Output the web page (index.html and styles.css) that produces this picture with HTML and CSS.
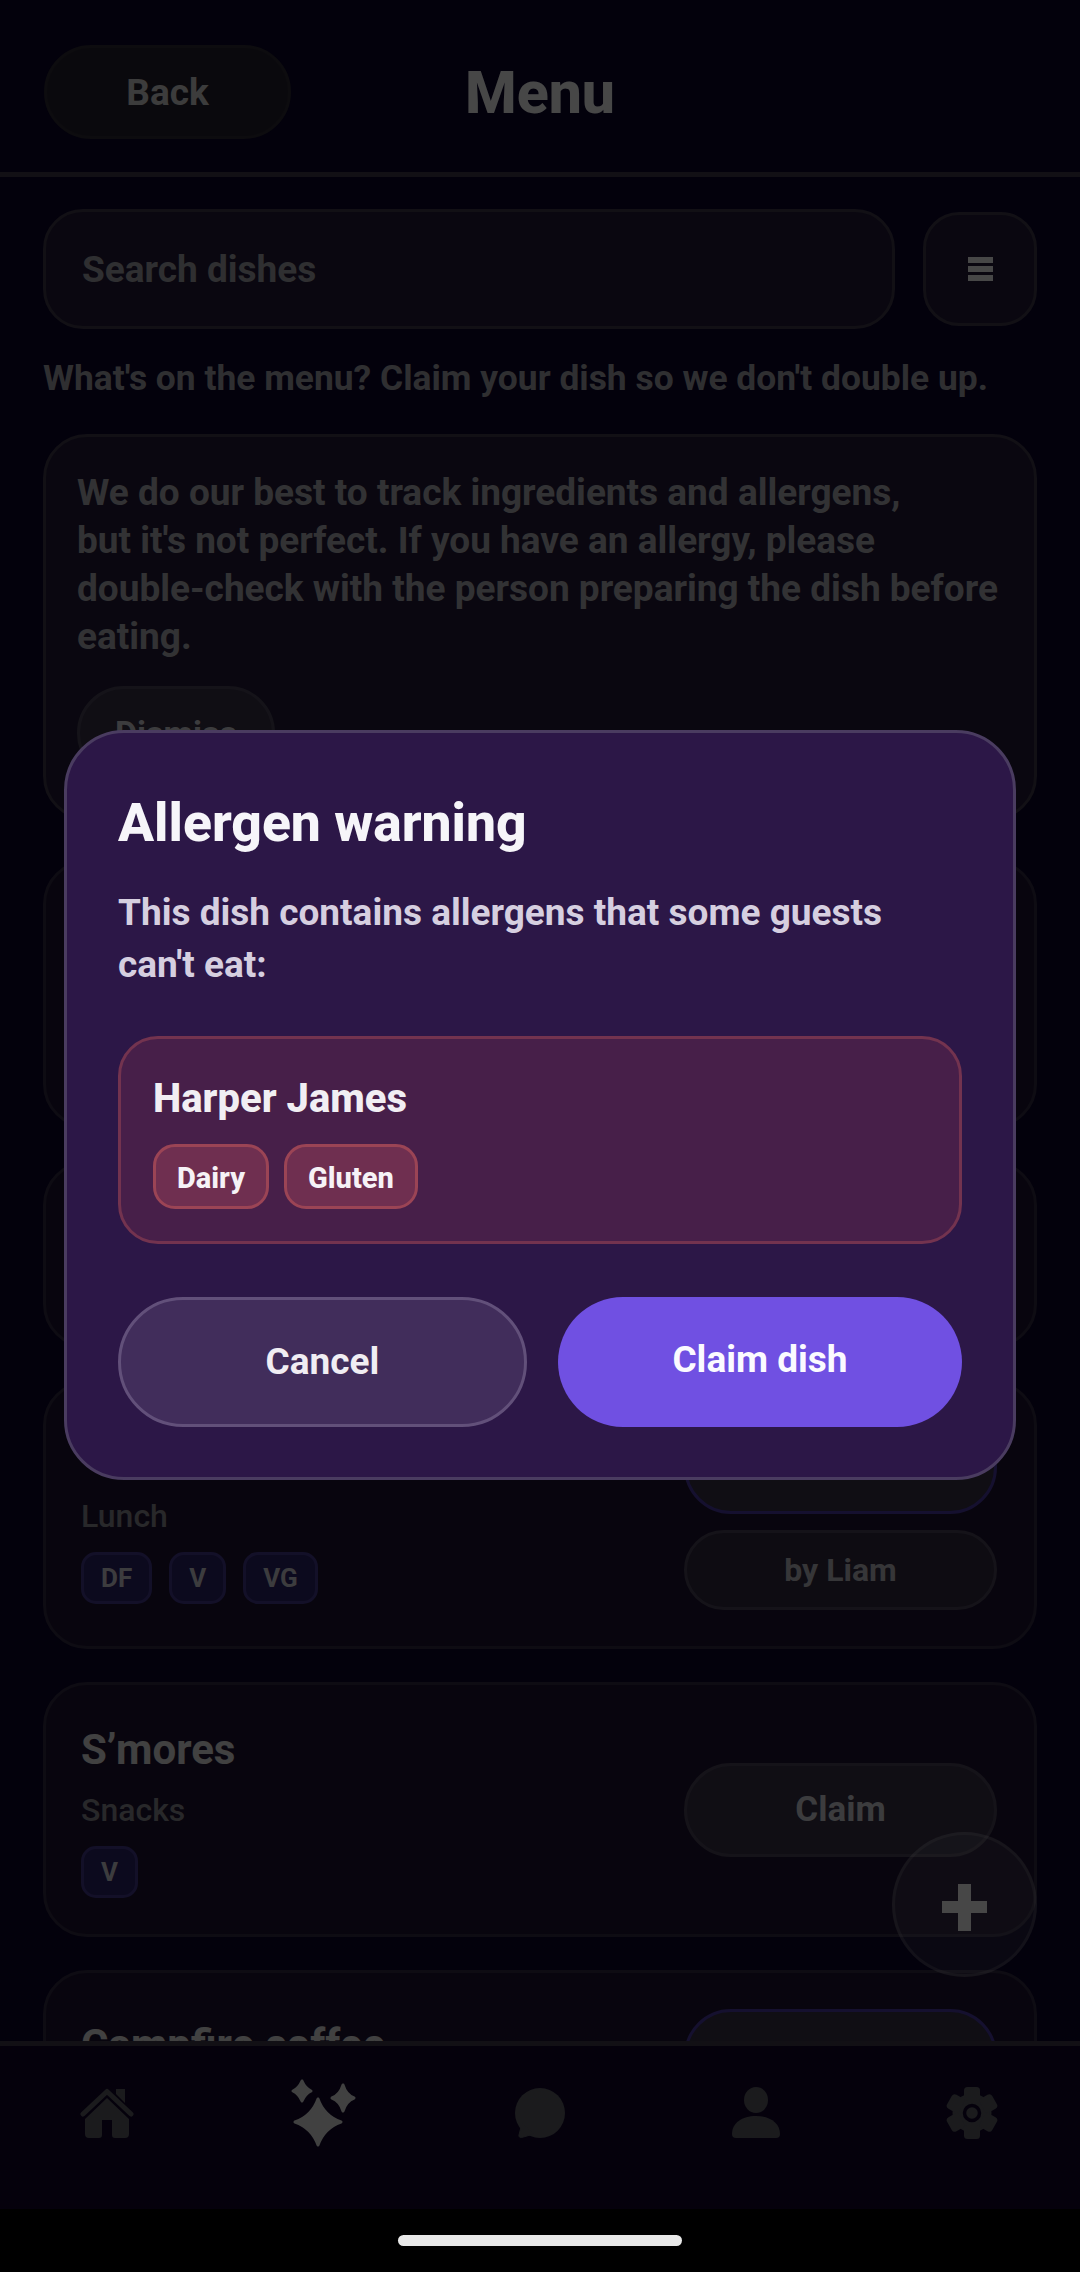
FILE: index.html
```html
<!DOCTYPE html>
<html lang="en">
<head>
    <meta charset="UTF-8">
    <meta name="viewport" content="width=device-width, initial-scale=1.0">
    <title>Menu</title>
    <link rel="stylesheet" href="styles.css">
</head>
<body>
    <div class="phone">
        <div class="app">
            <div class="header">
                <div class="header-left"><button class="back-button">Back</button></div>
                <h1 class="page-title">Menu</h1>
                <div></div>
            </div>

            <div class="search-row">
                <div class="search-input">Search dishes</div>
                <button class="filter-button" aria-label="Filter">
                    <span class="filter-bar"></span>
                    <span class="filter-bar"></span>
                    <span class="filter-bar"></span>
                </button>
            </div>
            <p class="intro">What's on the menu? Claim your dish so we don't double up.</p>

            <div class="dish-list">
                <div class="card notice">
                    <p class="notice-text">We do our best to track ingredients and allergens,<br>but it's not perfect. If you have an allergy, please<br>double-check with the person preparing the dish before<br>eating.</p>
                    <button class="dismiss-button">Dismiss</button>
                </div>

                <div class="card dish dish-tall"></div>
                <div class="card dish dish-short"></div>

                <div class="card dish dish-tall">
                    <div class="dish-info">
                        <div class="dish-name">&nbsp;</div>
                        <div class="dish-course">Lunch</div>
                        <div class="tags">
                            <span class="tag">DF</span>
                            <span class="tag">V</span>
                            <span class="tag">VG</span>
                        </div>
                    </div>
                    <div class="dish-actions">
                        <button class="claim-button claimed">Claimed</button>
                        <div class="claimed-by">by Liam</div>
                    </div>
                </div>

                <div class="card dish">
                    <div class="dish-info">
                        <div class="dish-name">S’mores</div>
                        <div class="dish-course">Snacks</div>
                        <div class="tags">
                            <span class="tag">V</span>
                        </div>
                    </div>
                    <div class="dish-actions">
                        <button class="claim-button">Claim</button>
                    </div>
                </div>

                <div class="card dish dish-tall dish-top">
                    <div class="dish-info">
                        <div class="dish-name">Campfire coffee</div>
                    </div>
                    <div class="dish-actions">
                        <button class="claim-button claimed">Claimed</button>
                    </div>
                </div>
            </div>

            <button class="fab" aria-label="Add dish">
                <svg width="45" height="47" viewBox="0 0 45 47"><path d="M16 0h13v17h16v12H29v18H16V29H0V17h16z" fill="currentColor"/></svg>
            </button>

            <div class="bottom-nav">
                <a class="nav-item">
                    <svg width="56" height="52" viewBox="0 0 56 52" fill="currentColor">
                        <path d="M36 2h9v14l-9-9z"/>
                        <path d="M3 27 27 4.500 51 27" fill="none" stroke="currentColor" stroke-width="5" stroke-linecap="round" stroke-linejoin="round"/>
                        <path d="M27 11 49 32V47a4 4 0 0 1-4 4H35a3 3 0 0 1-3-3V33H22V48a3 3 0 0 1-3 3H9a4 4 0 0 1-4-4V32Z"/>
                    </svg>
                </a>
                <a class="nav-item active">
                    <svg width="68" height="68" viewBox="0 0 68 68" fill="currentColor" stroke="currentColor" stroke-width="3" stroke-linejoin="round">
                        <path d="M12 2Q15 9 21 12 15 15 12 22 9 15 3 12 9 9 12 2Z"/>
                        <path d="M53 6Q56 16 64 19 56 22 53 32 50 22 42 19 50 16 53 6Z"/>
                        <path d="M28 20Q34 37 51 43 34 49 28 66 22 49 5 43 22 37 28 20Z"/>
                    </svg>
                </a>
                <a class="nav-item">
                    <svg width="52" height="52" viewBox="0 0 52 52" fill="currentColor">
                        <circle cx="26" cy="26" r="25"/>
                        <path d="M8 36 5 48a2 2 0 0 0 2.500 2.500L20 47Z" stroke="currentColor" stroke-width="1" stroke-linejoin="round"/>
                    </svg>
                </a>
                <a class="nav-item">
                    <svg width="48" height="52" viewBox="0 0 48 52" fill="currentColor">
                        <ellipse cx="24" cy="13" rx="12" ry="13"/>
                        <path d="M0 47C0 36 10 29 24 29S48 36 48 47a4 4 0 0 1-4 4H4a4 4 0 0 1-4-4Z"/>
                    </svg>
                </a>
                <a class="nav-item">
                    <svg width="52" height="52" viewBox="-26 -26 52 52" fill="currentColor">
                        <circle r="19.500"/>
                        <rect x="-8" y="-26" width="16" height="14" rx="3.500"/>
                        <rect x="-8" y="-26" width="16" height="14" rx="3.500" transform="rotate(60)"/>
                        <rect x="-8" y="-26" width="16" height="14" rx="3.500" transform="rotate(120)"/>
                        <rect x="-8" y="-26" width="16" height="14" rx="3.500" transform="rotate(180)"/>
                        <rect x="-8" y="-26" width="16" height="14" rx="3.500" transform="rotate(240)"/>
                        <rect x="-8" y="-26" width="16" height="14" rx="3.500" transform="rotate(300)"/>
                        <circle r="7.500" fill="none" stroke="#12072b" stroke-width="3.500"/>
                    </svg>
                </a>
            </div>

            <div class="overlay">
                <div class="modal">
                    <h2 class="modal-title">Allergen warning</h2>
                    <p class="modal-text">This dish contains allergens that some guests can't eat:</p>
                    <div class="warning-box">
                        <div class="guest-name">Harper James</div>
                        <div class="allergens">
                            <span class="allergen">Dairy</span>
                            <span class="allergen">Gluten</span>
                        </div>
                    </div>
                    <div class="modal-actions">
                        <button class="modal-button cancel-button">Cancel</button>
                        <button class="modal-button confirm-button">Claim dish</button>
                    </div>
                </div>
            </div>
        </div>

        <div class="system-bar"><span class="home-indicator"></span></div>
    </div>
</body>
</html>
```

FILE: styles.css
```css
:root {
    --bg: #0b042b;
    --surface: #241c39;
    --line: #40394e;
    --text: #d8d8de;
    --button: #39324a;
    --button-line: #4d465b;
    --purple-line: #4c3ca8;
}

* {
    margin: 0;
    padding: 0;
    box-sizing: border-box;
    font-family: 'Roboto', 'Liberation Sans', sans-serif;
}

body {
    background: #000;
}

button {
    border: none;
    background: none;
    color: inherit;
}

.phone {
    width: 1080px;
    height: 2272px;
    display: flex;
    flex-direction: column;
    overflow: hidden;
}

.app {
    position: relative;
    flex: 1;
    min-height: 0;
    display: flex;
    flex-direction: column;
    background: var(--bg);
    color: var(--text);
}

/* header */
.header {
    height: 177px;
    flex-shrink: 0;
    padding: 12px 44px 0;
    display: grid;
    grid-template-columns: 1fr auto 1fr;
    align-items: center;
    border-bottom: 5px solid var(--line);
}

.back-button {
    display: block;
    width: 247px;
    height: 94px;
    border-radius: 47px;
    background: #272330;
    border: 3px solid #2f2b36;
    color: #d8d8d8;
    font-size: 37px;
    font-weight: 700;
}

.page-title {
    font-size: 59px;
    font-weight: 800;
    color: #fff;
}

/* search */
.search-row {
    flex-shrink: 0;
    margin: 32px 43px 0;
    display: flex;
    align-items: center;
    gap: 28px;
}

.search-input {
    flex: 1;
    height: 120px;
    padding-left: 36px;
    display: flex;
    align-items: center;
    border-radius: 40px;
    background: var(--surface);
    border: 3px solid var(--line);
    color: #a8a8b0;
    font-size: 37px;
    font-weight: 700;
}

.filter-button {
    width: 114px;
    height: 114px;
    display: flex;
    flex-direction: column;
    align-items: center;
    justify-content: center;
    gap: 3px;
    border-radius: 36px;
    background: var(--surface);
    border: 3px solid var(--line);
}

.filter-bar {
    width: 25px;
    height: 6px;
    background: #fff;
}

.intro {
    flex-shrink: 0;
    margin: 25px 43px 32px;
    font-size: 35.400px;
    line-height: 48px;
    font-weight: 700;
    color: #a8a8b0;
}

/* list */
.dish-list {
    flex: 1;
    min-height: 0;
    padding: 0 43px;
    overflow: hidden;
}

.card {
    border-radius: 44px;
    background: var(--surface);
    border: 3px solid var(--line);
}

.notice {
    height: 386px;
    margin-bottom: 40px;
    padding: 32px 31px 0;
}

.notice-text {
    font-size: 37px;
    line-height: 48px;
    font-weight: 700;
    color: #b4b4bc;
    white-space: nowrap;
}

.dismiss-button {
    display: block;
    width: 198px;
    height: 94px;
    margin-top: 25px;
    border-radius: 47px;
    background: var(--button);
    border: 3px solid var(--button-line);
    font-size: 34px;
    font-weight: 700;
}

.dish {
    min-height: 255px;
    margin-bottom: 33px;
    padding: 0 37px 0 35px;
    display: flex;
    align-items: center;
    justify-content: space-between;
    background: #1f1433;
    border-color: #332b45;
}

.dish-tall {
    min-height: 268px;
}

.dish-short {
    min-height: 187px;
}

.dish-top {
    align-items: flex-start;
    padding-top: 36px;
}

.dish-top .dish-name {
    margin-top: 7px;
}

.dish-name {
    height: 58px;
    line-height: 58px;
    font-size: 42px;
    font-weight: 700;
    color: #e8e8e8;
}

.dish-course {
    margin-top: 9px;
    height: 44px;
    line-height: 44px;
    font-size: 32px;
    font-weight: 500;
    color: #909098;
}

.tags {
    margin-top: 14px;
    display: flex;
    gap: 17px;
}

.tag {
    height: 52px;
    min-width: 57px;
    padding: 0 17px;
    display: flex;
    align-items: center;
    justify-content: center;
    border-radius: 15px;
    background: #2e246b;
    border: 3px solid #443a90;
    font-size: 26px;
    font-weight: 700;
    color: #d8d8de;
}

.dish-actions {
    width: 313px;
    display: flex;
    flex-direction: column;
    gap: 16px;
}

.claim-button {
    height: 94px;
    border-radius: 47px;
    background: var(--button);
    border: 3px solid var(--button-line);
    font-size: 35px;
    font-weight: 700;
    color: #d8d8de;
}

.claimed {
    border-color: var(--purple-line);
    color: #b4b4bc;
}

.claimed-by {
    height: 80px;
    display: flex;
    align-items: center;
    justify-content: center;
    border-radius: 40px;
    background: #332b42;
    border: 3px solid var(--button-line);
    font-size: 32px;
    font-weight: 700;
    color: #c0c0c8;
}

/* floating add button */
.fab {
    position: absolute;
    left: 892px;
    top: 1832px;
    width: 145px;
    height: 145px;
    padding-top: 6px;
    display: flex;
    align-items: center;
    justify-content: center;
    border-radius: 50%;
    background: rgba(255, 255, 255, 0.11);
    border: 3px solid rgba(255, 255, 255, 0.14);
    color: #fff;
}

/* bottom nav */
.bottom-nav {
    position: relative;
    height: 168px;
    flex-shrink: 0;
    padding-bottom: 30px;
    display: grid;
    grid-template-columns: repeat(5, 1fr);
    align-items: center;
    justify-items: center;
    background: #12072b;
    border-top: 5px solid var(--line);
}

.nav-item {
    display: flex;
    color: #60606a;
}

.nav-item.active {
    color: #e8e8e8;
}

/* modal */
.overlay {
    position: absolute;
    inset: 0;
    display: flex;
    align-items: center;
    justify-content: center;
    background: rgba(0, 0, 0, 0.72);
}

.modal {
    width: 952px;
    padding: 60px 51px 50px;
    border-radius: 60px;
    background: #2c1747;
    border: 3px solid #4a3c60;
}

.modal-title {
    font-size: 53.400px;
    line-height: 60px;
    font-weight: 800;
    color: #f6f5f9;
}

.modal-text {
    margin-top: 34px;
    font-size: 37px;
    line-height: 52px;
    font-weight: 700;
    color: #d6cfe0;
}

.warning-box {
    margin-top: 45px;
    height: 208px;
    padding: 35px 32px 0;
    border-radius: 40px;
    background: #471f49;
    border: 3px solid #73334f;
}

.guest-name {
    font-size: 40px;
    line-height: 50px;
    font-weight: 800;
    color: #f1eef3;
}

.allergens {
    margin-top: 20px;
    display: flex;
    gap: 15px;
}

.allergen {
    height: 65px;
    padding: 3px 21px 0;
    display: flex;
    align-items: center;
    border-radius: 22px;
    background: #6f2f50;
    border: 3px solid #9b4455;
    font-size: 29px;
    font-weight: 800;
    color: #f6f2f6;
}

.modal-actions {
    margin-top: 53px;
    display: flex;
    gap: 31px;
}

.modal-button {
    height: 130px;
    border-radius: 65px;
    font-size: 37px;
    font-weight: 700;
}

.cancel-button {
    flex: 0 0 409px;
    background: #412d5b;
    border: 3px solid #62507a;
    color: #f0edf3;
}

.confirm-button {
    flex: 1;
    padding-bottom: 4px;
    background: #7050e2;
    color: #fbfaff;
}

/* system area */
.system-bar {
    height: 63px;
    flex-shrink: 0;
    padding-top: 26px;
    display: flex;
    justify-content: center;
    background: #000;
}

.home-indicator {
    width: 284px;
    height: 11px;
    border-radius: 6px;
    background: #e9e9e9;
}
```
